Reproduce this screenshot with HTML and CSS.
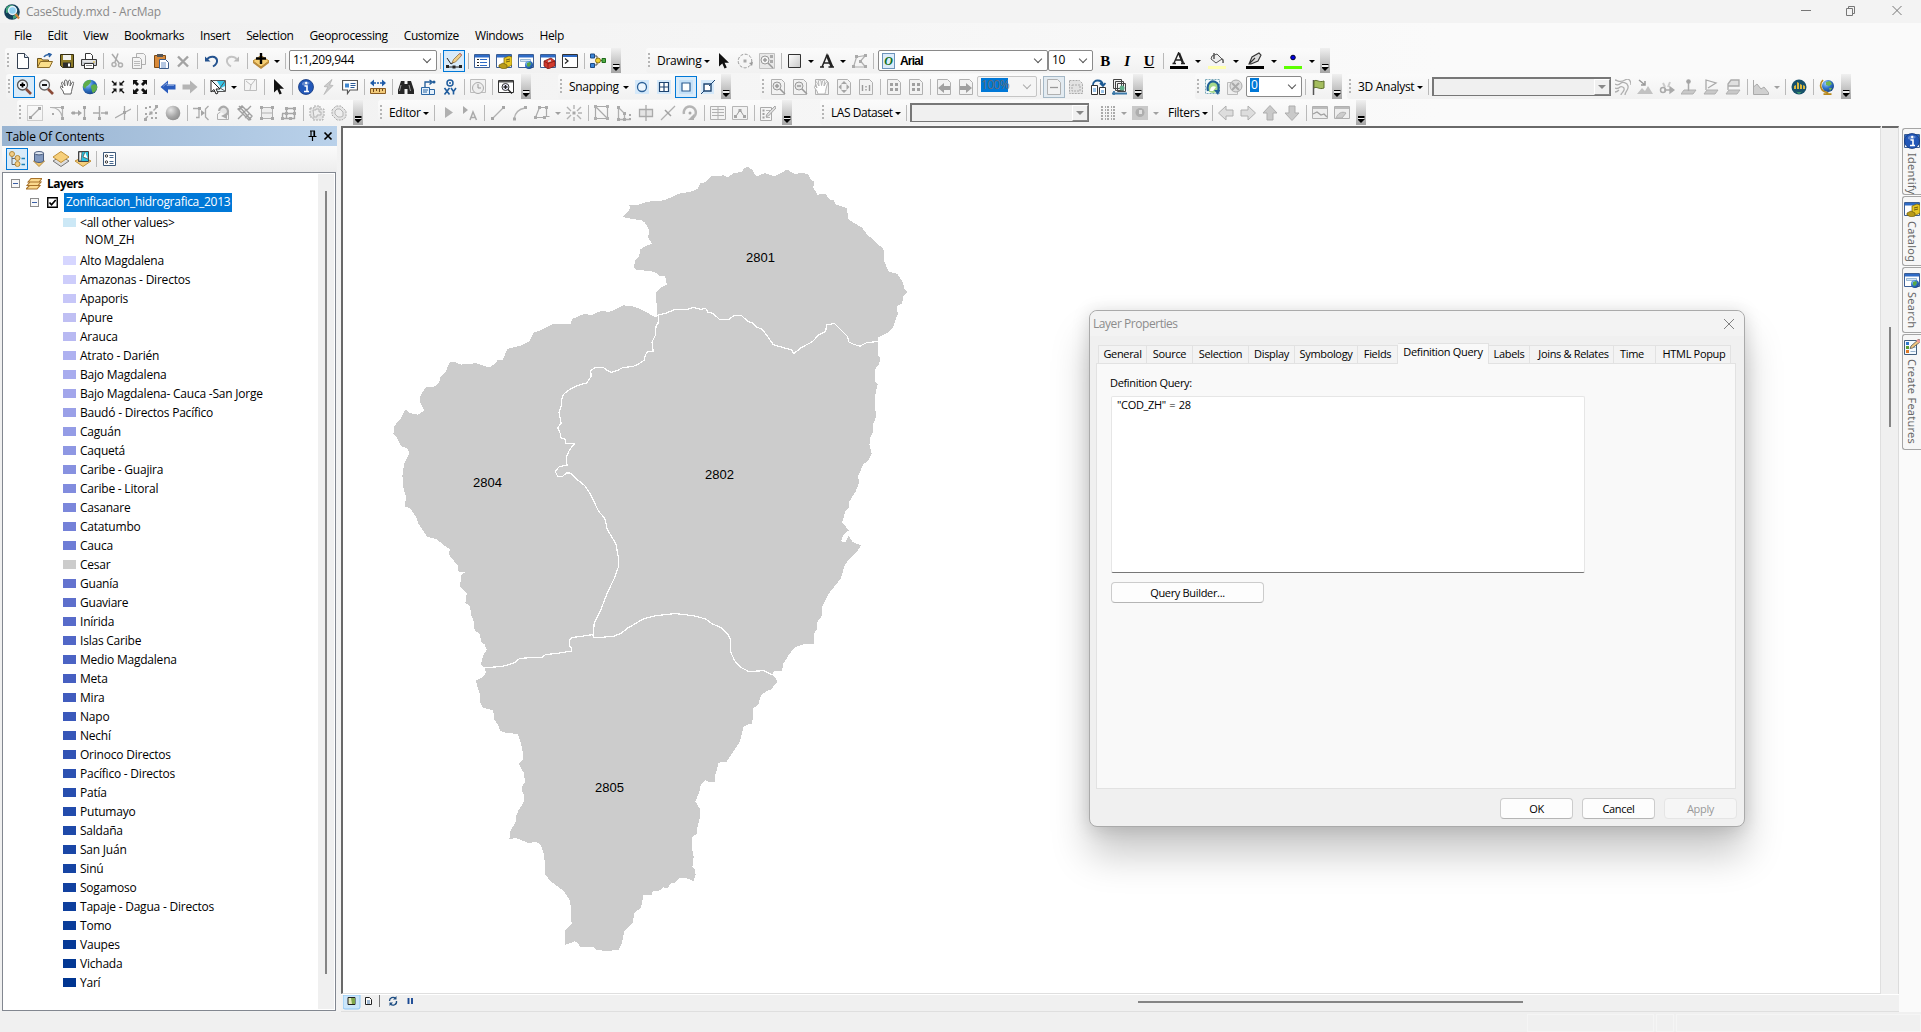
FILE: index.html
```html
<!DOCTYPE html>
<html lang="en">
<head>
<meta charset="utf-8">
<title>CaseStudy.mxd - ArcMap</title>
<link rel="stylesheet" href="styles.css">
</head>
<body>
<svg class="defs" width="0" height="0">
<defs>
<linearGradient id="gl" x1="0" y1="0" x2="1" y2="1"><stop offset="0" stop-color="#fff"/><stop offset="1" stop-color="#c9c9c9"/></linearGradient>
<radialGradient id="earth" cx=".35" cy=".3" r=".8"><stop offset="0" stop-color="#9fd0ff"/><stop offset=".5" stop-color="#2f73c8"/><stop offset="1" stop-color="#123a78"/></radialGradient>
<radialGradient id="ball" cx=".35" cy=".3" r=".8"><stop offset="0" stop-color="#e6e6e6"/><stop offset=".6" stop-color="#a5a5a5"/><stop offset="1" stop-color="#8a8a8a"/></radialGradient>
</defs>
<symbol id="new" viewBox="0 0 16 16"><path d="M2.500.5h7l4 4v11h-11z" fill="#fff" stroke="#333f50"/><path d="M9.500.5v4h4" fill="#dde8f5" stroke="#333f50"/></symbol>
<symbol id="open" viewBox="0 0 16 16"><path d="M.5 14.500v-9h4l1 1.500h6v2" fill="#e8bf55" stroke="#6b5320"/><path d="M.5 14.500l3-6h12l-3 6z" fill="#fbdf8b" stroke="#8a6b28"/><path d="M7 4c1-2 3-2.500 6-2.500M11 0l3 1.500-2 2.500" fill="none" stroke="#2d62a5" stroke-width="1.500"/></symbol>
<symbol id="save" viewBox="0 0 16 16"><path d="M1.500 1.500h13v13h-11l-2-2z" fill="#8c7a28" stroke="#332c10"/><path d="M4 2h8v5H4z" fill="#f2f2ee"/><path d="M4 9.500h8v5H4z" fill="#2c2c2c"/><path d="M9 10.500h2v3H9z" fill="#fff"/></symbol>
<symbol id="print" viewBox="0 0 16 16"><path d="M4.500 6V.5h5l2 2V6" fill="#fff" stroke="#333"/><path d="M.5 6.500h15v6H.5z" fill="#c9ccd0" stroke="#3a3a3a"/><path d="M2 8h12" stroke="#fff"/><path d="M3.500 10.500h9v5h-9z" fill="#fff" stroke="#333"/><path d="M5 12.500h6" stroke="#888"/><path d="M12 8.500h2v1h-2z" fill="#e2b530"/></symbol>
<symbol id="cut" viewBox="0 0 16 16"><path d="M3 1l7 9M9 .5L6 9" stroke="#aaa" stroke-width="1.500" fill="none"/><circle cx="5" cy="11.500" r="2" fill="none" stroke="#b0b0b0" stroke-width="1.500"/><circle cx="11.500" cy="12" r="2" fill="none" stroke="#b0b0b0" stroke-width="1.500"/></symbol>
<symbol id="copy" viewBox="0 0 16 16"><path d="M5.500.5h7l2 2v9h-9z" fill="#f4f4f4" stroke="#b0b0b0"/><path d="M1.500 4.500h7l2 2v9h-9z" fill="#f4f4f4" stroke="#a8a8a8"/><path d="M3 8.500h6M3 10.500h6M3 12.500h6" stroke="#bbb"/></symbol>
<symbol id="paste" viewBox="0 0 16 16"><path d="M1.500 2.500h11v12h-11z" fill="#d98a3a" stroke="#7d4a15"/><path d="M4 1h6v3H4z" fill="#555"/><path d="M6.500 6.500h6l3 3v6h-9z" fill="#fff" stroke="#3d5c8a"/><path d="M8 10h5M8 12h5M8 14h5" stroke="#6d90c4"/></symbol>
<symbol id="del" viewBox="0 0 16 16"><path d="M3 3.500l10 10M13 3.500l-10 10" stroke="#a3a3a3" stroke-width="2.400"/></symbol>
<symbol id="undo" viewBox="0 0 16 16"><path d="M2 3.500v5h5.500z" fill="#24538f"/><path d="M4 6.500c3-4 9-3.500 10 .5.5 3-1.500 5-4 6.500" fill="none" stroke="#24538f" stroke-width="2"/></symbol>
<symbol id="redo" viewBox="0 0 16 16"><path d="M14 3.500v5H8.500z" fill="#b8b8b8"/><path d="M12 6.500c-3-4-9-3.500-10 .5-.5 3 1.500 5 4 6.500" fill="none" stroke="#c4c4c4" stroke-width="2"/></symbol>
<symbol id="add" viewBox="0 0 16 16"><path d="M0 8l8-5.500L16 8l-8 6z" fill="#f5ce73" stroke="#b7862c"/><path d="M0 8l8 6 8-6v2l-8 6-8-6z" fill="#b98a3c"/><path d="M8 0v11M3 5.500h10" stroke="#000" stroke-width="2.400"/></symbol>
<symbol id="edtool" viewBox="0 0 16 16"><path d="M1.500 12v2h13v-2" fill="none" stroke="#222"/><path d="M0 12h3v3H0zM6.500 12.500h3v3h-3zM13 12h3v3h-3z" fill="#222"/><path d="M1 5l4 6 3-2" fill="none" stroke="#222"/><path d="M14 0L7.500 6.500 6 10l3.500-1L16 2z" fill="#f0cf86" stroke="#806030" stroke-width=".7"/><path d="M13.500.5l2 2" stroke="#d98a8a" stroke-width="1.500"/></symbol>
<symbol id="win" viewBox="0 0 16 16"><path d="M.5 1.500h15v13H.5z" fill="#fff" stroke="#3c5e94"/><path d="M1 2h14v2.500H1z" fill="#2e6bc6"/></symbol>
<symbol id="toc" viewBox="0 0 16 16"><use href="#win"/><path d="M3 6.500h2M3 9.500h2M3 12.500h2" stroke="#222"/><path d="M6 6.500h7M6 9.500h7M6 12.500h7" stroke="#2e6bc6"/></symbol>
<symbol id="cat" viewBox="0 0 16 16"><use href="#win"/><path d="M8 5l5-2 3 1v8l-5 2.500L8 13z" fill="#e6c522" stroke="#6d5b0d" stroke-width=".7"/><path d="M3 12l4-2 4 2v3l-4 1-4-2z" fill="#b89a18" stroke="#6d5b0d" stroke-width=".7"/><path d="M10 7l4-1M10 9l4-1" stroke="#6d5b0d"/></symbol>
<symbol id="sea" viewBox="0 0 16 16"><use href="#win"/><path d="M2.500 6.500h10v2h-10z" fill="#d7e8f7" stroke="#7da2c4" stroke-width=".7"/><circle cx="11" cy="12" r="4" fill="url(#earth)"/><path d="M9 10l3-1 1 2-2 3-2-1z" fill="#57a845"/></symbol>
<symbol id="tbx" viewBox="0 0 16 16"><use href="#win"/><path d="M4 8l7-3 4 3v5l-7 3-4-3z" fill="#d23a2e" stroke="#701510" stroke-width=".7"/><path d="M4 8l4 2.500 7-2.500M8 10.500V16" stroke="#701510" stroke-width=".7" fill="none"/><path d="M8 8.500l3-1" stroke="#ddd" stroke-width="1.500"/></symbol>
<symbol id="py" viewBox="0 0 16 16"><path d="M.5 1.500h15v13H.5z" fill="#fff" stroke="#333"/><path d="M1 2h14v2H1z" fill="#2e6bc6"/><path d="M3 5.500L6 8l-3 2.500" fill="none" stroke="#222" stroke-width="1.200"/></symbol>
<symbol id="model" viewBox="0 0 16 16"><path d="M4 3h3v9H4M7 7.500h8" fill="none" stroke="#555"/><path d="M.5 1h4v4h-4zM.5 10.500h4v4h-4z" fill="#3c86d8" stroke="#1d4b84"/><circle cx="8" cy="7.500" r="2.500" fill="#f0d032" stroke="#8a7510"/><path d="M12 5.500h3.500v4H12z" fill="#4fae45" stroke="#1f6a1a"/></symbol>
<symbol id="zin" viewBox="0 0 16 16"><circle cx="6.500" cy="6" r="5" fill="#f0f4f8" stroke="#555" stroke-width="1.300"/><path d="M6.500 3.500v5M4 6h5" stroke="#000" stroke-width="1.800"/><path d="M10 10l5 5" stroke="#8a4a38" stroke-width="2.600"/></symbol>
<symbol id="zout" viewBox="0 0 16 16"><circle cx="6.500" cy="6" r="5" fill="#f0f4f8" stroke="#666" stroke-width="1.300"/><path d="M4 6h5" stroke="#000" stroke-width="1.800"/><path d="M10 10l5 5" stroke="#8a4a38" stroke-width="2.600"/></symbol>
<symbol id="hand" viewBox="0 0 16 16"><path d="M4 15l-1-3-3-4c0-1.500 1.500-1 3 1L1.500 4C2 2.500 3 3 3.500 4.500L5 7 4.500 2C5 .5 6.500.7 7 2l.5 4.500L8.500 2c.5-1.300 2-1 2 .5L10 7l2-3.500c1-1 2-.5 1.500 1L12 10c0 2-1 3-1 5z" fill="#fff" stroke="currentColor"/></symbol>
<symbol id="globe" viewBox="0 0 16 16"><circle cx="8" cy="8" r="7.300" fill="url(#earth)"/><path d="M3 3c2-2 5-2.500 6-1.500S8 4 7 5.500 4 7 3.500 9 1 8 1 7s.5-2.500 2-4zM10 6c2-1 4-1 5 1s-1 5-3 6.500-2-2-2.500-3.500S8.500 7 10 6z" fill="#5fae4a"/></symbol>
<symbol id="fin" viewBox="0 0 16 16"><path d="M6.500 6.500v-4L5 4 2.500 1.500 1.500 2.500 4 5 2.500 6.500zM9.500 6.500v-4L11 4l2.500-2.500 1 1L12 5l1.500 1.500zM6.500 9.500v4L5 12l-2.500 2.500-1-1L4 11 2.500 9.500zM9.500 9.500v4L11 12l2.500 2.500 1-1L12 11l1.500-1.500z" fill="currentColor"/></symbol>
<symbol id="fout" viewBox="0 0 16 16"><path d="M1 1h5L4.500 2.500 7 5 5 7 2.500 4.500 1 6zM15 1v5l-1.500-1.500L11 7 9 5l2.500-2.500L10 1zM1 15v-5l1.500 1.500L5 9l2 2-2.500 2.500L6 15zM15 15h-5l1.500-1.500L9 11l2-2 2.500 2.500L15 10z" fill="currentColor"/></symbol>
<symbol id="prev" viewBox="0 0 16 16"><path d="M.5 8L8 1.500v4h7.500v5H8v4z" fill="currentColor"/><path d="M3 7.500l4-3.500v2.500h7" fill="none" stroke="#fff" stroke-opacity=".35"/></symbol>
<symbol id="next" viewBox="0 0 16 16"><path d="M15.500 8L8 1.500v4H.5v5H8v4z" fill="currentColor"/></symbol>
<symbol id="self" viewBox="0 0 16 16"><path d="M2.500 1.500h13v11h-13z" fill="#e9f6fb" stroke="#555"/><path d="M7 2h8v5l-4 2z" fill="#36c5e8"/><path d="M15 2l-5 7 5 3" fill="none" stroke="#555"/><path d="M1 1v12l3-2.500 2 4.500 2-1-2-4h4z" fill="#fff" stroke="#222"/></symbol>
<symbol id="clr" viewBox="0 0 16 16"><path d="M2.500.5h12v11h-12zM4 2l5 4 4-5M9 6l-1 5" fill="#f4f4f4" stroke="#bdbdbd"/></symbol>
<symbol id="arrow" viewBox="0 0 16 16"><path d="M4 0v13.500l3.300-3 2.200 5 2.300-1-2.200-4.800H14z" fill="currentColor"/></symbol>
<symbol id="info" viewBox="0 0 16 16"><circle cx="8" cy="8" r="7.500" fill="#2257b8" stroke="#14377c" stroke-width=".8"/><path d="M4 4a6 5 0 0 1 8 0 7 7 0 0 1-8 2z" fill="#fff" opacity=".3"/><path d="M6.500 7H9v5M6 12.500h5" stroke="#fff" stroke-width="1.600" fill="none"/><circle cx="8.200" cy="4" r="1.200" fill="#fff"/></symbol>
<symbol id="bolt" viewBox="0 0 16 16"><path d="M12 .5L4 7.500l4 .5-4 7.500L13 6.500 9.500 6z" fill="#ccc" stroke="#b2b2b2" stroke-width=".8"/></symbol>
<symbol id="popup" viewBox="0 0 16 16"><path d="M.5 1.500h15v9.500H8L5.500 14.500V11h-5z" fill="#fff" stroke="#555" stroke-width="1.200"/><path d="M3 4.500h4v4H3z" fill="#3f86cf"/><path d="M8.500 4.500h5M8.500 6.500h5M8.500 8.500h4" stroke="#2a5a96"/></symbol>
<symbol id="ruler" viewBox="0 0 16 16"><path d="M.5 9.500h15v5H.5z" fill="#f0c979" stroke="#8a5c22"/><path d="M3.500 10v3M6.500 10v2M9.500 10v3M12.500 10v2" stroke="#6d4515"/><path d="M0 4l4-3.500v7zM16 4l-4-3.500v7z" fill="#1f5ba8"/><path d="M4 4h8" stroke="#1f5ba8" stroke-width="1.500" stroke-dasharray="2 1"/></symbol>
<symbol id="bino" viewBox="0 0 16 16"><path d="M3 2h3.500v3h3V2H13l3 9v4H9.500v-5h-3v5H0v-4z" fill="#262626"/><path d="M3 6l-1.500 6M11 6l1.500 6" stroke="#999"/></symbol>
<symbol id="route" viewBox="0 0 16 16"><path d="M1.500 8.500h8v7h-8zM9.500 10.500h5v5h-5z" fill="#e4f0fb" stroke="#2b66a3"/><path d="M5 8V3h6M9.500 1l3 2-3 2.500" fill="none" stroke="#1f5b99" stroke-width="1.300"/><path d="M3 11h5M3 13h4" stroke="#2b66a3"/><circle cx="14" cy="3" r="1.500" fill="#1f5b99"/></symbol>
<symbol id="xy" viewBox="0 0 16 16"><circle cx="8" cy="4" r="3" fill="none" stroke="#205d9e" stroke-width="1.500"/><circle cx="8" cy="4" r="1" fill="#205d9e"/><path d="M2.500 9l5 6.500M7.500 9l-5 6.500M9 9l2.500 3.500M14 9l-2.500 3.500v3" fill="none" stroke="#205d9e" stroke-width="1.600"/></symbol>
<symbol id="time" viewBox="0 0 16 16"><path d="M.5.500h15v13H.5z" fill="#f2f2f2" stroke="#bcbcbc"/><circle cx="8" cy="9" r="5.500" fill="#eee" stroke="#aaa"/><path d="M8 5v4h3" fill="none" stroke="#999"/></symbol>
<symbol id="viewer" viewBox="0 0 16 16"><path d="M.5 1.500h15v12H.5z" fill="#fff" stroke="#333"/><path d="M1 2h14v1.500H1z" fill="#555"/><circle cx="7.500" cy="8" r="3.500" fill="#eef" stroke="#333"/><path d="M7.500 6v4M5.500 8h4M10 10.500l4 4" stroke="#222" stroke-width="1.300"/></symbol>
<symbol id="line" viewBox="0 0 16 16"><path d="M2.500 13.500l11-11" stroke="#b0b0b0" stroke-width="1.300"/><path d="M1 12h3v3H1zM12 1h3v3h-3z" fill="#a5a5a5"/></symbol>
<symbol id="scale" viewBox="0 0 16 16"><path d="M.5.500h15v15H.5z" fill="none" stroke="#a5a5a5" stroke-dasharray="1 1"/><path d="M4 12l8-8" stroke="#aaa" stroke-width="1.300"/><path d="M2 11h3v3H2zM11 2h3v3h-3z" fill="#a0a0a0"/></symbol>
<symbol id="arc" viewBox="0 0 16 16"><path d="M1 2.500h12.500v12M2 2.500c6 0 10 3 11.500 10" fill="none" stroke="#b3b3b3" stroke-width="1.200"/><path d="M12 1h3v3h-3zM12 12h3v3h-3zM3 8h2v2H3z" fill="#a9a9a9"/></symbol>
<symbol id="curve" viewBox="0 0 16 16"><path d="M2 14c1-6 5-10 11-11" fill="none" stroke="#b3b3b3" stroke-width="1.300"/><path d="M1 12.500h3v3H1zM12 1h3v3h-3z" fill="#a9a9a9"/></symbol>
<symbol id="ext" viewBox="0 0 16 16"><path d="M0 8h8M13.500 1v14" stroke="#aaa" stroke-width="1.300"/><path d="M7 5l4 3-4 3zM12 1h3v3h-3zM12 12h3v3h-3zM1 6.500h3v3H1z" fill="#a5a5a5"/></symbol>
<symbol id="trim" viewBox="0 0 16 16"><path d="M6.500 1v14M0 8h6M8 8h6" stroke="#aaa" stroke-width="1.400" fill="none"/><path d="M12 6.500h3v3h-3zM5 12h3v3H5z" fill="#a8a8a8"/></symbol>
<symbol id="isec" viewBox="0 0 16 16"><path d="M0 13l16-9M9.500 1v14" stroke="#ababab" stroke-width="1.300"/><path d="M8 6h3v3H8z" fill="#a5a5a5"/></symbol>
<symbol id="expl" viewBox="0 0 16 16"><path d="M1 2l4 4M15 2l-4 4M1 14l4-4M15 14l-4-4M8 0v4M8 12v4M0 8h4M12 8h4" stroke="#b3b3b3" stroke-width="1.400"/><path d="M6.500 6.500h3v3h-3z" fill="#a8a8a8"/></symbol>
<symbol id="frac" viewBox="0 0 16 16"><path d="M2 14L14 2" stroke="#aaa" stroke-width="1.400" stroke-dasharray="4 2"/><path d="M1 13h3v3H1zM12 0h3v3h-3zM6.500 6.500h3v3h-3zM2 2h2v2H2zM12 12h2v2h-2zM6 1h2v2H6zM12 7h2v2h-2zM2 8h2v2H2zM8 12h2v2H8z" fill="#a8a8a8"/></symbol>
<symbol id="ball1" viewBox="0 0 16 16"><circle cx="8" cy="8" r="7.300" fill="url(#ball)"/></symbol>
<symbol id="conn" viewBox="0 0 16 16"><path d="M0 3.500h6v9H3M15.500 1l-3 3v8l3 3" fill="none" stroke="#aaa" stroke-width="1.300"/><path d="M8 5l4 3-4 3zM5 2h3v3H5z" fill="#a5a5a5"/></symbol>
<symbol id="rot" viewBox="0 0 16 16"><path d="M2.500 14.500V9l3-2M13.500 14.500h-11M13.500 14.500V6" fill="none" stroke="#b0b0b0"/><path d="M4 6a4.500 4.500 0 1 1 7 4" fill="#e4e4e4" stroke="#aaa" stroke-width="2.200"/><path d="M6 11l6-3v6z" fill="#aaa"/></symbol>
<symbol id="rect2" viewBox="0 0 16 16"><path d="M2.500 2.500h11v11h-11zM2.500 8h11" fill="#eee" stroke="#b0b0b0"/><path d="M1 1h3v3H1zM12 1h3v3h-3zM1 12h3v3H1zM12 12h3v3h-3z" fill="#a8a8a8"/></symbol>
<symbol id="hatch" viewBox="0 0 16 16"><path d="M1 4l4-3 10 10-3 4zM2 1l12 14M6 1l-4 4M10 4l-5 5M13 8l-5 5M14 1L9 6M6 9l-5 5" fill="none" stroke="#a0a0a0" stroke-width="1.400"/></symbol>
<symbol id="grid4" viewBox="0 0 16 16"><path d="M5.500 2v12M13.500 2v12M5.500 3.500h8M1 8.500h13M1 13.500h13M1.500 8.500v5" fill="none" stroke="#a5a5a5" stroke-width="1.400"/><path d="M4 2h3v3H4zM12 2h3v3h-3zM4 7h3v3H4zM12 7h3v3h-3zM0 12h3v3H0zM8 12h3v3H8z" fill="#aaa"/></symbol>
<symbol id="blob" viewBox="0 0 16 16"><path d="M1 3h4V1h6v3h4v7h-1v4H4v-3H1z" fill="#e4e4e4" stroke="#aaa" stroke-dasharray="2 1"/><path d="M4 5h3V4h3v3h2v3H8v2H5z" fill="#eee" stroke="#b5b5b5"/></symbol>
<symbol id="blob2" viewBox="0 0 16 16"><path d="M1 5l4-4h5l5 5v6l-4 3H6L1 10z" fill="#e4e4e4" stroke="#aaa" stroke-dasharray="2 1"/><path d="M4 6l2-2h3l3 3v4l-2 1H7L4 9z" fill="#eee" stroke="#b5b5b5"/></symbol>
<symbol id="earrow" viewBox="0 0 16 16"><path d="M5 2v11l8-5.500z" fill="#b0b0b0"/></symbol>
<symbol id="eann" viewBox="0 0 16 16"><path d="M1 1v8l5-4z" fill="#aaa"/><path d="M8 15l3-8 3.500 8M9 12.500h4.500" fill="none" stroke="#aaa" stroke-width="1.500"/></symbol>
<symbol id="poly" viewBox="0 0 16 16"><path d="M5.500 2.500h7v9h3M5.500 2.500l-4 10h9" fill="none" stroke="#aaa" stroke-width="1.200"/><path d="M4 1h3v3H4zM11 1h3v3h-3zM0 11h3v3H0zM9 11h3v3H9z" fill="#aaa"/></symbol>
<symbol id="vert" viewBox="0 0 16 16"><path d="M1.500 14V1.500h12v12h-12zM2 2l11 11" fill="none" stroke="#aaa" stroke-width="1.200"/><path d="M0 0h3v3H0zM12 0h3v3h-3zM0 12h3v3H0zM12 12h3v3h-3z" fill="#b0b0b0"/></symbol>
<symbol id="resh" viewBox="0 0 16 16"><path d="M2.500 1v13.500h12M2.500 2.500l6 6v6" fill="none" stroke="#b0b0b0" stroke-width="1.300"/><path d="M1 1h3v3H1zM7 7h3v3H7zM1 13h3v3H1zM7 13h3v3H7zM13 9h2v2h-2zM13 13h2v2h-2z" fill="#aaa"/></symbol>
<symbol id="cutp" viewBox="0 0 16 16"><path d="M1.500 4.500h13v7h-13zM8 0v16" fill="#e4e4e4" stroke="#aaa" stroke-width="1.300"/></symbol>
<symbol id="split" viewBox="0 0 16 16"><path d="M1 15L15 1" stroke="#b0b0b0" stroke-width="1.300"/><path d="M5 5l6 6" stroke="#a0a0a0" stroke-width="1.500"/></symbol>
<symbol id="rotg" viewBox="0 0 16 16"><path d="M2 9a6 6 0 1 1 8 4" fill="none" stroke="#b5b5b5" stroke-width="2.500"/><path d="M12 9v6H6z" fill="#b0b0b0"/><circle cx="8" cy="8" r="1.500" fill="#aaa"/></symbol>
<symbol id="table" viewBox="0 0 16 16"><path d="M.5 1.500h15v13H.5zM8 2v12M2 4.500h12M2 7.500h12M2 10.500h12" fill="#f2f2f2" stroke="#b0b0b0"/></symbol>
<symbol id="sk" viewBox="0 0 16 16"><path d="M.5 1.500h15v13H.5z" fill="#f2f2f2" stroke="#b5b5b5"/><path d="M3.500 12L8 5l4.500 7" fill="none" stroke="#999"/><path d="M6.500 4h3v3h-3zM2 10h3v3H2zM11 10h3v3h-3z" fill="#a5a5a5"/></symbol>
<symbol id="cf" viewBox="0 0 16 16"><path d="M.5 2.500h11v13H.5z" fill="#f5f5f5" stroke="#aaa"/><path d="M2.500 5.500h2M2.500 9h2M2.500 12.500h2" stroke="#a0a0a0" stroke-width="2"/><path d="M6 5.500h4M6 12.500h4" stroke="#b5b5b5"/><path d="M15 1L7 9l-1 2.500L8.500 11 16 3z" fill="#ddd" stroke="#999" stroke-width=".8"/></symbol>
<symbol id="cfc" viewBox="0 0 16 16"><path d="M.5 1.500h12v14H.5z" fill="#f4faff" stroke="#44607e"/><path d="M2 3h3v3H2z" fill="#2f78cd"/><path d="M2 7h3v3H2z" fill="#5a9e33"/><path d="M2 11h3v3H2z" fill="#dd7a2a"/><path d="M6.500 8.500h5M6.500 12.500h5" stroke="#98b2cc"/><path d="M15 0L7 7 6 9.500 8.500 9 16 3z" fill="#f1c57c" stroke="#555" stroke-width=".8"/><path d="M13 1l3 2" stroke="#ef9a9a" stroke-width="2.500"/></symbol>
<symbol id="s1" viewBox="0 0 16 16"><path d="M1 1h14v14H1z" fill="#d5e9fa"/><circle cx="8" cy="8" r="4.500" fill="#edf6fd" stroke="#2b6098" stroke-width="1.300"/></symbol>
<symbol id="s2" viewBox="0 0 16 16"><path d="M1 1h14v14H1z" fill="#d5e9fa"/><path d="M3.500 3.500h9v9h-9zM8 3.500v9M3.500 8h9" fill="#fff" stroke="#1d4471" stroke-width="1.200"/></symbol>
<symbol id="s3" viewBox="0 0 16 16"><path d="M1 1h14v14H1z" fill="#c5e1f8"/><path d="M4 4h8v8H4z" fill="#fff" stroke="#2b5c90" stroke-width="1.200"/></symbol>
<symbol id="s4" viewBox="0 0 16 16"><path d="M1 1h13v14H1z" fill="#d5e9fa"/><path d="M4 5h7v7H4z" fill="#fff" stroke="#1d4471" stroke-width="1.400"/><path d="M9 7l6-6M1 15l3-3" stroke="#1d4471"/></symbol>
<symbol id="page" viewBox="0 0 16 16"><path d="M1.500.500h10l3 3v12h-13z" fill="#f2f2f2" stroke="#b0b0b0"/></symbol>
<symbol id="pzin" viewBox="0 0 16 16"><use href="#page"/><circle cx="7" cy="7" r="4" fill="#e8e8e8" stroke="#999"/><path d="M7 5v4M5 7h4M10 10l5 5" stroke="#999" stroke-width="1.500"/></symbol>
<symbol id="pzout" viewBox="0 0 16 16"><use href="#page"/><circle cx="7" cy="7" r="4" fill="#e8e8e8" stroke="#999"/><path d="M5 7h4M10 10l5 5" stroke="#999" stroke-width="1.500"/></symbol>
<symbol id="pfull" viewBox="0 0 16 16"><use href="#page"/><path d="M8 2l3 3H5zM8 14l3-3H5zM2.500 8l3-3v6zM13.500 8l-3-3v6z" fill="#a5a5a5"/></symbol>
<symbol id="p11" viewBox="0 0 16 16"><use href="#page"/><path d="M4.500 6v6M11.500 6v6M8 7v1.500M8 10v1.500" stroke="#999" stroke-width="1.400"/></symbol>
<symbol id="pfin" viewBox="0 0 16 16"><use href="#page"/><path d="M4 4h3v3H4zM9 4h3v3H9zM4 9h3v3H4zM9 9h3v3H9z" fill="#a0a0a0"/></symbol>
<symbol id="pl" viewBox="0 0 16 16"><use href="#page"/><path d="M2 9l6-5v3h6v4H8v3z" fill="#a0a0a0"/></symbol>
<symbol id="pr" viewBox="0 0 16 16"><use href="#page"/><path d="M14 9L8 4v3H2v4h6v3z" fill="#a0a0a0"/></symbol>
<symbol id="pdr" viewBox="0 0 16 16"><use href="#page"/><path d="M4 8.500h8" stroke="#999" stroke-width="1.300"/></symbol>
<symbol id="pdash" viewBox="0 0 16 16"><path d="M1.500 1.500h10l3 3v10h-13zM4 6h8v6H4z" fill="#e2e2e2" stroke="#aaa" stroke-dasharray="2 1"/></symbol>
<symbol id="chl" viewBox="0 0 16 16"><path d="M1.500 6.500h6v9h-6zM9.500 8.500h6v7h-6z" fill="#fff" stroke="#333"/><path d="M3 9h3v4H3zM11 11h3v3h-3z" fill="#9cc4e8"/><path d="M3 6c0-6 9-6 10 0M10 4l3 3 2.500-3" fill="none" stroke="#1d5a93" stroke-width="1.800"/></symbol>
<symbol id="ddp" viewBox="0 0 16 16"><path d="M1.500.500h8v9h-8zM3.500 2.500h8v9h-8zM5.500 4.500h8v8h-8z" fill="#f2f2f2" stroke="#444"/><circle cx="10" cy="9" r="2.500" fill="#5fae8a"/><path d="M0 14.500h15M2 12v4" stroke="#3b78a8" stroke-width="1.800"/></symbol>
<symbol id="ov" viewBox="0 0 16 16"><path d="M.5.500h14v14H.5z" fill="#f4fafc" stroke="#7aa8b8" stroke-dasharray="2 1"/><circle cx="8" cy="8" r="6" fill="#a6d88b"/><path d="M3 12C1 4 7 0 12 4c2 2 2 5 1 9" fill="none" stroke="#1e5f98" stroke-width="2.200"/><path d="M9 11h6l-2 5z" fill="#1e5f98"/><path d="M5 12c0-4 3-6 6-4l-3 4z" fill="#fff"/></symbol>
<symbol id="ovx" viewBox="0 0 16 16"><path d="M.5 3.500h10v12H.5z" fill="#eee" stroke="#bbb"/><circle cx="9" cy="7" r="6" fill="#ddd" stroke="#aaa"/><path d="M5 4l7 7M12 4l-7 7" stroke="#aaa" stroke-width="2"/></symbol>
<symbol id="flag" viewBox="0 0 16 16"><path d="M2.500 1v15" stroke="#555" stroke-width="1.500"/><path d="M3 2c3-2 5 2 10 0v7c-5 2-7-2-10 0z" fill="#a4bd5e" stroke="#5c6f2c"/></symbol>
<symbol id="rotc" viewBox="0 0 16 16"><circle cx="8" cy="8" r="6.800" fill="none" stroke="#999" stroke-dasharray="3 1.500"/><path d="M6.500 6.500h3v3h-3z" fill="#aaa"/><path d="M12 10l4-1-1 4z" fill="#999"/></symbol>
<symbol id="zsel" viewBox="0 0 16 16"><path d="M.5.500h15v15H.5z" fill="#e8e8e8" stroke="#c0c0c0"/><circle cx="6" cy="7" r="4" fill="#f4f4f4" stroke="#999"/><path d="M6 5v4M4 7h4M9 10l5 5" stroke="#999" stroke-width="1.500"/><path d="M11 2h3v3h-3zM11 7h3v3h-3z" fill="#aaa"/></symbol>
<symbol id="rect" viewBox="0 0 16 16"><path d="M1.500 1.500h12v13h-12z" fill="url(#gl)" stroke="#333"/></symbol>
<symbol id="bigA" viewBox="0 0 16 16"><path d="M3 14L8 2l5 12M4.500 10h6M1 14h4M9.500 14H15" fill="none" stroke="#222" stroke-width="1.500"/><path d="M8 2l5 12" stroke="#222" stroke-width="2.800"/></symbol>
<symbol id="everts" viewBox="0 0 16 16"><path d="M14.500 2.500l-9 1.500-3 10h12l-5-6z" fill="none" stroke="#b0b0b0" stroke-width="1.200"/><path d="M4 2h3v3H4zM13 1h3v3h-3zM1 12h3v3H1zM13 12h3v3h-3zM8 7h3v3H8z" fill="#aaa"/></symbol>
<symbol id="fc" viewBox="0 0 20 18"><path d="M5 11l4.500-10 4.500 10M6.500 8h6M3.500 11.500h3.500M12 11.500h4" fill="none" stroke="#222" stroke-width="1.400"/><path d="M10 1l4 10" stroke="#222" stroke-width="2.200"/><path d="M1 14h18v3H1z" fill="#000"/></symbol>
<symbol id="fill" viewBox="0 0 20 18"><path d="M5 4l5-2 5 5-6 4-5-4z" fill="#eee" stroke="#555"/><path d="M7 7V1M15 7c2 1 1 3 1 4" fill="none" stroke="#555" stroke-width="1.500"/><path d="M1 14h18v3H1z" fill="#ffffb0"/></symbol>
<symbol id="pen" viewBox="0 0 20 18"><path d="M4 12l3-7 7-4 2 2-3 6-7 3zM4 12l6-6" fill="#ddd" stroke="#333" stroke-width="1.100"/><path d="M1 14h18v3H1z" fill="#000"/></symbol>
<symbol id="mark" viewBox="0 0 20 18"><circle cx="10" cy="5.500" r="2.300" fill="#0000e0" stroke="#002"/><path d="M1 14h18v3H1z" fill="#5cff00"/></symbol>
<symbol id="cont" viewBox="0 0 16 16"><path d="M0 1c4 1 5 3 10 0s6 3 6 5M0 5c3 2 5 0 6-1s6-1 7 3-3 5-3 9M0 9c2 1 4 0 5-1s5 0 4 3-3 3-3 5M0 13c2 0 3-1 4-2" fill="none" stroke="#b0b0b0" stroke-width="1.300"/></symbol>
<symbol id="mtn" viewBox="0 0 16 16"><path d="M0 15l5-6 3 3 3-5 5 8z" fill="#c2c2c2"/><path d="M2 1l6 5M8 2v4H4" fill="none" stroke="#999" stroke-width="1.500"/></symbol>
<symbol id="sight" viewBox="0 0 16 16"><path d="M4 4l2 4M11 3l-2 5" stroke="#ccc" stroke-width="2"/><circle cx="4" cy="11" r="2.500" fill="none" stroke="#aaa" stroke-width="1.500"/><path d="M5 11h8M11 8l4 3-4 3z" fill="#aaa" stroke="#aaa" stroke-width="1.300"/></symbol>
<symbol id="ppt" viewBox="0 0 16 16"><path d="M3 11h12l-3 4H0z" fill="#c8c8c8" stroke="#b0b0b0"/><path d="M7.500 4v8" stroke="#aaa" stroke-width="1.500"/><circle cx="7.500" cy="2.500" r="2.300" fill="#a5a5a5"/></symbol>
<symbol id="pln" viewBox="0 0 16 16"><path d="M4 11h11l-3 4H1z" fill="#c8c8c8" stroke="#b0b0b0"/><path d="M3 11V1l10 3-8 5" fill="none" stroke="#aaa" stroke-width="1.300"/></symbol>
<symbol id="pol3" viewBox="0 0 16 16"><path d="M4 11h11l-3 4H1z" fill="#c8c8c8" stroke="#b0b0b0"/><path d="M3 11V5l3-4h8v6H3" fill="#e0e0e0" stroke="#aaa" stroke-width="1.300"/></symbol>
<symbol id="prof" viewBox="0 0 16 16"><path d="M.5 1v14.500h15v-2L11 8 8 10 4 5 .5 8z" fill="#d0d0d0" stroke="#aaa"/></symbol>
<symbol id="scene" viewBox="0 0 16 16"><circle cx="8" cy="8" r="7.500" fill="#17506b"/><path d="M3 10V7l2-1v4zM6 10V3l2 1v6zM9 10V5l2 1v4zM12 10V6l2 1v3z" fill="#dcb93c"/><path d="M3 11c3 3 7 3 10 0l-5 4z" fill="#3fa06a"/></symbol>
<symbol id="aglobe" viewBox="0 0 16 16"><circle cx="9" cy="7" r="6" fill="url(#earth)"/><path d="M7 3l4-1 2 3-3 2-3-1zM10 9h3l-2 3z" fill="#6fb551"/><path d="M4 1C0 5 1 12 8 13.500M8.500 13v2M4.500 15.200h8" fill="none" stroke="#b8891c" stroke-width="1.700"/></symbol>
<symbol id="las" viewBox="0 0 16 16"><path d="M1 2h14M1 5h14M1 8h14M1 11h14M1 14h14" stroke="#aaa" stroke-width="2" stroke-dasharray="2 2 1 1"/></symbol>
<symbol id="surf" viewBox="0 0 16 16"><path d="M0 1h16v14H0z" fill="#c9c9c9"/><circle cx="8" cy="7.500" r="4.500" fill="#aeaeae"/><path d="M7 5h3v4H7z" fill="#e0e0e0"/></symbol>
<symbol id="aL" viewBox="0 0 16 16"><path d="M.5 8L8 1v4h7v6H8v4z" fill="#ddd" stroke="#b0b0b0"/></symbol>
<symbol id="aR" viewBox="0 0 16 16"><path d="M15.500 8L8 1v4H1v6h7v4z" fill="#ddd" stroke="#b0b0b0"/></symbol>
<symbol id="aU" viewBox="0 0 16 16"><path d="M8 .5L15 8h-4v7H5V8H1z" fill="#c9c9c9" stroke="#adadad"/></symbol>
<symbol id="aD" viewBox="0 0 16 16"><path d="M8 15.500L15 8h-4V1H5v7H1z" fill="#c9c9c9" stroke="#adadad"/></symbol>
<symbol id="pw" viewBox="0 0 16 16"><path d="M.5 1.500h15v12H.5z" fill="#eee" stroke="#b0b0b0"/><path d="M1 2h14v2H1z" fill="#bbb"/><path d="M1 9l4-2 4 3 3-1 3 3" fill="none" stroke="#a0a0a0" stroke-width="1.300"/></symbol>
<symbol id="vw" viewBox="0 0 16 16"><path d="M.5 1.500h15v12H.5z" fill="#eee" stroke="#b0b0b0"/><path d="M1 2h14v2H1z" fill="#bbb"/><path d="M2 13c2-5 6-7 10-5l-4 5z" fill="#ccc" stroke="#b0b0b0"/></symbol>
<symbol id="t1" viewBox="0 0 16 16"><path d="M3 5v8.500h4M3 7.500h4" fill="none" stroke="#666"/><circle cx="3" cy="3" r="2.500" fill="#f2cd85" stroke="#b48a3c"/><circle cx="8.500" cy="7" r="2.500" fill="#f2cd85" stroke="#b48a3c"/><circle cx="8.500" cy="13" r="2.500" fill="#f2cd85" stroke="#b48a3c"/><path d="M12.500 7.500H16M12.500 13.500H16" stroke="#1d7fb5" stroke-width="1.600"/></symbol>
<symbol id="t2" viewBox="0 0 16 16"><path d="M2.500 10L8 15.500l5.500-5.500z" fill="#f2c66c" stroke="#b48a3c"/><path d="M3.500 2v8c2 2 7 2 9 0V2z" fill="#8299bf" stroke="#4a5c7d"/><ellipse cx="8" cy="2.200" rx="4.500" ry="1.700" fill="#dfe7f2" stroke="#4a5c7d"/></symbol>
<symbol id="t3" viewBox="0 0 16 16"><path d="M0 10l8-5 8 5-8 5.500z" fill="#ddd" stroke="#777"/><path d="M0 6l8-5.500L16 6l-8 5.500z" fill="#f6cf7b" stroke="#c0913a"/></symbol>
<symbol id="t4" viewBox="0 0 16 16"><path d="M0 10l8-4 8 4-8 5.500z" fill="#f6cf7b" stroke="#c0913a"/><path d="M3.500.500h10v10h-10z" fill="#2cc0dd" stroke="#444"/><path d="M4 1h3l-1 9H4zM10 1l-2 5 5 2" fill="#fff" stroke="#444" stroke-width=".7"/></symbol>
<symbol id="t5" viewBox="0 0 16 16"><path d="M1.500 1.500h12v13h-12z" fill="#fff" stroke="#3d5878"/><circle cx="4.500" cy="5" r="1.200" fill="none" stroke="#333"/><circle cx="4.500" cy="11" r="1.200" fill="none" stroke="#333"/><path d="M7.500 4.500h4M7.500 6.500h4M7.500 10.500h4M7.500 12.500h4" stroke="#47688f"/></symbol>
<symbol id="lyr" viewBox="0 0 16 14"><path d="M0 12l3.500-3.500H14L11 12zM1 8.500L4 5h11l-3 3.500zM2 5l3-3.500h11L13 5z" fill="#fbd98e" stroke="#a8722a" stroke-width="1.100"/></symbol>
<symbol id="app" viewBox="0 0 16 16"><circle cx="8" cy="8" r="7.800" fill="#143f5a"/><path d="M2 4c2-3 6-4 8-2L6 8l-4 1zM9 12l5-3-2 5-3 1z" fill="#42a37c"/><circle cx="8.500" cy="6.500" r="4" fill="#8fd0f0" stroke="#e6f2f8" stroke-width="1.400"/><path d="M11.500 10l3.500 4.500" stroke="#d0843c" stroke-width="2.200"/></symbol>
</svg>

<div class="window">
  <header class="titlebar">
    <svg class="app"><use href="#app"/></svg><span class="apptitle">CaseStudy.mxd - ArcMap</span>
    <svg class="winbtns" viewBox="0 0 110 20"><path d="M4 9.500h10M49.500 7.500h6v7h-6zM51.500 7.500v-2h6v7h-2M95.500 5l9 9M104.500 5l-9 9" fill="none" stroke="#777"/></svg>
  </header>
  <nav class="menu"><span>File</span><span>Edit</span><span>View</span><span>Bookmarks</span><span>Insert</span><span>Selection</span><span>Geoprocessing</span><span>Customize</span><span>Windows</span><span>Help</span></nav>

  <div class="row">
    <div class="tb std"><i class="grip"></i>
      <svg class="ic"><use href="#new"/></svg><svg class="ic"><use href="#open"/></svg><svg class="ic"><use href="#save"/></svg><svg class="ic"><use href="#print"/></svg><i class="sep"></i>
      <svg class="ic"><use href="#cut"/></svg><svg class="ic"><use href="#copy"/></svg><svg class="ic"><use href="#paste"/></svg><svg class="ic"><use href="#del"/></svg><i class="sep"></i>
      <svg class="ic"><use href="#undo"/></svg><svg class="ic"><use href="#redo"/></svg><i class="sep"></i>
      <svg class="ic"><use href="#add"/></svg><i class="car"></i><i class="sep"></i>
      <div class="combo c-scale"><span>1:1,209,944</span><i class="chev"></i></div><i class="sep"></i>
      <span class="on"><svg class="ic"><use href="#edtool"/></svg></span><i class="sep"></i>
      <svg class="ic"><use href="#toc"/></svg><svg class="ic"><use href="#cat"/></svg><svg class="ic"><use href="#sea"/></svg><svg class="ic"><use href="#tbx"/></svg><svg class="ic"><use href="#py"/></svg><i class="sep"></i>
      <svg class="ic"><use href="#model"/></svg><i class="more"></i>
    </div>
    <div class="tb draw"><i class="grip"></i><span class="lbl l-draw">Drawing<i class="car"></i></span>
      <svg class="ic"><use href="#arrow"/></svg><svg class="ic"><use href="#rotc"/></svg><svg class="ic"><use href="#zsel"/></svg><i class="sep"></i>
      <svg class="ic"><use href="#rect"/></svg><i class="car"></i><svg class="ic"><use href="#bigA"/></svg><i class="car"></i><svg class="ic"><use href="#everts"/></svg><i class="sep"></i>
      <div class="combo c-font"><b class="ot">O</b><strong>Arial</strong><i class="chev"></i></div><div class="combo c-size"><span>10</span><i class="chev"></i></div>
      <span class="fmt fb">B</span><span class="fmt fi">I</span><span class="fmt fu">U</span><i class="sep last"></i>
      <svg class="icw"><use href="#fc"/></svg><i class="car wide"></i><svg class="icw"><use href="#fill"/></svg><i class="car wide"></i><svg class="icw"><use href="#pen"/></svg><i class="car wide"></i><svg class="icw"><use href="#mark"/></svg><i class="car wide"></i><i class="more tight"></i>
    </div>
  </div>

  <div class="row">
    <div class="tb tools"><i class="grip"></i>
      <span class="on"><svg class="ic"><use href="#zin"/></svg></span><svg class="ic"><use href="#zout"/></svg><svg class="ic k6"><use href="#hand"/></svg><svg class="ic"><use href="#globe"/></svg><i class="sep"></i>
      <svg class="ic"><use href="#fin"/></svg><svg class="ic"><use href="#fout"/></svg><i class="sep"></i>
      <svg class="ic blue"><use href="#prev"/></svg><svg class="ic gray"><use href="#next"/></svg><i class="sep"></i>
      <svg class="ic"><use href="#self"/></svg><i class="car"></i><svg class="ic"><use href="#clr"/></svg><i class="sep"></i>
      <svg class="ic"><use href="#arrow"/></svg><i class="sep"></i>
      <svg class="ic"><use href="#info"/></svg><svg class="ic"><use href="#bolt"/></svg><svg class="ic"><use href="#popup"/></svg><i class="sep"></i>
      <svg class="ic"><use href="#ruler"/></svg><i class="sep"></i>
      <svg class="ic"><use href="#bino"/></svg><svg class="ic"><use href="#route"/></svg><svg class="ic"><use href="#xy"/></svg><i class="sep"></i>
      <svg class="ic"><use href="#time"/></svg><i class="sep"></i>
      <svg class="ic"><use href="#viewer"/></svg><i class="more"></i>
    </div>
    <div class="tb snap"><i class="grip"></i><span class="lbl l-snap">Snapping<i class="car"></i></span>
      <svg class="ic"><use href="#s1"/></svg><svg class="ic"><use href="#s2"/></svg><span class="on"><svg class="ic"><use href="#s3"/></svg></span><svg class="ic"><use href="#s4"/></svg><i class="more"></i>
    </div>
    <div class="tb layout"><i class="grip"></i>
      <svg class="ic"><use href="#pzin"/></svg><svg class="ic"><use href="#pzout"/></svg><svg class="ic gray"><use href="#page"/><use href="#hand"/></svg><svg class="ic"><use href="#pfull"/></svg><svg class="ic"><use href="#p11"/></svg><i class="sep"></i>
      <svg class="ic"><use href="#pfin"/></svg><svg class="ic"><use href="#pfin"/></svg><i class="sep"></i>
      <svg class="ic"><use href="#pl"/></svg><svg class="ic"><use href="#pr"/></svg>
      <div class="combo c-pct"><span>100%</span><i class="chev"></i></div><i class="sep"></i>
      <span class="on dim"><svg class="ic"><use href="#pdr"/></svg></span><svg class="ic"><use href="#pdash"/></svg><svg class="ic"><use href="#chl"/></svg><svg class="ic"><use href="#ddp"/></svg><i class="more"></i>
    </div>
    <div class="tb ddp"><i class="grip"></i>
      <svg class="ic"><use href="#ov"/></svg><svg class="ic"><use href="#ovx"/></svg>
      <div class="combo c-zero"><span>0</span><i class="chev"></i></div><i class="sep"></i><svg class="ic"><use href="#flag"/></svg><i class="more"></i>
    </div>
    <div class="tb three"><i class="grip"></i><span class="lbl l-3d">3D Analyst<i class="car"></i></span><i class="sep"></i>
      <div class="combo flat"><i class="btn"></i></div>
      <svg class="ic"><use href="#cont"/></svg><svg class="ic"><use href="#mtn"/></svg><svg class="ic"><use href="#sight"/></svg><svg class="ic"><use href="#ppt"/></svg><svg class="ic"><use href="#pln"/></svg><svg class="ic"><use href="#pol3"/></svg><i class="sep"></i>
      <svg class="ic"><use href="#prof"/></svg><i class="car off"></i><i class="sep"></i><svg class="ic"><use href="#scene"/></svg><i class="sep"></i><svg class="ic"><use href="#aglobe"/></svg><i class="more"></i>
    </div>
  </div>

  <div class="row">
    <div class="tb adv"><i class="grip"></i>
      <svg class="ic"><use href="#scale"/></svg><svg class="ic"><use href="#arc"/></svg><svg class="ic"><use href="#ext"/></svg><svg class="ic"><use href="#trim"/></svg><svg class="ic"><use href="#isec"/></svg><i class="sep"></i>
      <svg class="ic"><use href="#frac"/></svg><svg class="ic"><use href="#ball1"/></svg><i class="sep"></i>
      <svg class="ic"><use href="#conn"/></svg><svg class="ic"><use href="#rot"/></svg><svg class="ic"><use href="#hatch"/></svg><svg class="ic"><use href="#rect2"/></svg><svg class="ic"><use href="#grid4"/></svg><i class="sep"></i>
      <svg class="ic"><use href="#blob"/></svg><svg class="ic"><use href="#blob2"/></svg><i class="more"></i>
    </div>
    <div class="tb editor"><i class="grip"></i><span class="lbl l-ed">Editor<i class="car"></i></span><i class="sep"></i>
      <svg class="ic"><use href="#earrow"/></svg><svg class="ic"><use href="#eann"/></svg><i class="sep"></i>
      <svg class="ic"><use href="#line"/></svg><svg class="ic"><use href="#curve"/></svg><svg class="ic"><use href="#poly"/></svg><i class="car off"></i><svg class="ic"><use href="#expl"/></svg><i class="sep"></i>
      <svg class="ic"><use href="#vert"/></svg><svg class="ic"><use href="#resh"/></svg><svg class="ic"><use href="#cutp"/></svg><svg class="ic"><use href="#split"/></svg><svg class="ic"><use href="#rotg"/></svg><i class="sep"></i>
      <svg class="ic"><use href="#table"/></svg><svg class="ic"><use href="#sk"/></svg><i class="sep"></i><svg class="ic"><use href="#cf"/></svg><i class="more"></i>
    </div>
    <div class="tb las"><i class="grip"></i><span class="lbl l-las">LAS Dataset<i class="car"></i></span><i class="sep"></i>
      <div class="combo flat"><i class="btn"></i></div>
      <svg class="ic first"><use href="#las"/></svg><i class="car off"></i><svg class="ic"><use href="#surf"/></svg><i class="car off"></i>
      <span class="lbl l-fil">Filters<i class="car"></i></span><i class="sep"></i>
      <svg class="ic"><use href="#aL"/></svg><svg class="ic"><use href="#aR"/></svg><svg class="ic"><use href="#aU"/></svg><svg class="ic"><use href="#aD"/></svg><i class="sep"></i>
      <svg class="ic"><use href="#pw"/></svg><svg class="ic"><use href="#vw"/></svg><i class="more"></i>
    </div>
  </div>

  <main class="work">
    <aside class="toc">
      <div class="toc-title"><span>Table Of Contents</span><svg viewBox="0 0 30 14"><path d="M4 2h5M5 2v5M8 2v5M8.500 2v5M2.500 7.500h8M6.500 8v4" stroke="#000" stroke-width="1.200" fill="none"/><path d="M18.500 3.500l7 7M25.500 3.500l-7 7" stroke="#000" stroke-width="1.700"/></svg></div>
      <div class="toc-tools"><span class="on"><svg class="ic"><use href="#t1"/></svg></span><svg class="ic"><use href="#t2"/></svg><svg class="ic"><use href="#t3"/></svg><svg class="ic"><use href="#t4"/></svg><i class="sep"></i><svg class="ic"><use href="#t5"/></svg></div>
      <div class="tree">
        <div class="list">
          <div class="root"><i class="exp"></i><svg class="lyr"><use href="#lyr"/></svg><b>Layers</b></div>
          <div class="layer"><i class="exp"></i><svg class="chk" viewBox="0 0 11 11"><path d="M.75.750h9.500v9.500H.750z" fill="#fff" stroke="#000" stroke-width="1.400"/><path d="M2.500 5.500l2 2.300L8.700 3" fill="none" stroke="#000" stroke-width="1.700"/></svg><span class="sel">Zonificacion_hidrografica_2013</span></div>
          <div class="it other"><i style="background:#cce8f6"></i>&lt;all other values&gt;</div>
          <div class="head">NOM_ZH</div>
          <div class="it"><i style="background:#d6d6ff"></i>Alto Magdalena</div>
          <div class="it"><i style="background:#cdcdfb"></i>Amazonas - Directos</div>
          <div class="it"><i style="background:#c6c6f8"></i>Apaporis</div>
          <div class="it"><i style="background:#bfbff3"></i>Apure</div>
          <div class="it"><i style="background:#b8b9f2"></i>Arauca</div>
          <div class="it"><i style="background:#aeb1f0"></i>Atrato - Darién</div>
          <div class="it"><i style="background:#a8acee"></i>Bajo Magdalena</div>
          <div class="it"><i style="background:#a2a6eb"></i>Bajo Magdalena- Cauca -San Jorge</div>
          <div class="it"><i style="background:#9aa0e8"></i>Baudó - Directos Pacífico</div>
          <div class="it"><i style="background:#949ce6"></i>Caguán</div>
          <div class="it"><i style="background:#8e97e3"></i>Caquetá</div>
          <div class="it"><i style="background:#8791e0"></i>Caribe - Guajira</div>
          <div class="it"><i style="background:#818cde"></i>Caribe - Litoral</div>
          <div class="it"><i style="background:#7b87db"></i>Casanare</div>
          <div class="it"><i style="background:#7481d8"></i>Catatumbo</div>
          <div class="it"><i style="background:#6e7dd6"></i>Cauca</div>
          <div class="it"><i style="background:#cccccc"></i>Cesar</div>
          <div class="it"><i style="background:#6373cf"></i>Guanía</div>
          <div class="it"><i style="background:#5d6fcc"></i>Guaviare</div>
          <div class="it"><i style="background:#576bca"></i>Inírida</div>
          <div class="it"><i style="background:#5167c7"></i>Islas Caribe</div>
          <div class="it"><i style="background:#4b63c4"></i>Medio Magdalena</div>
          <div class="it"><i style="background:#465fc1"></i>Meta</div>
          <div class="it"><i style="background:#415cbe"></i>Mira</div>
          <div class="it"><i style="background:#3b59bb"></i>Napo</div>
          <div class="it"><i style="background:#3656b8"></i>Nechí</div>
          <div class="it"><i style="background:#3153b5"></i>Orinoco Directos</div>
          <div class="it"><i style="background:#2c51b2"></i>Pacífico - Directos</div>
          <div class="it"><i style="background:#274eaf"></i>Patía</div>
          <div class="it"><i style="background:#224bac"></i>Putumayo</div>
          <div class="it"><i style="background:#1e49a9"></i>Saldaña</div>
          <div class="it"><i style="background:#1a46a6"></i>San Juán</div>
          <div class="it"><i style="background:#1644a3"></i>Sinú</div>
          <div class="it"><i style="background:#1241a0"></i>Sogamoso</div>
          <div class="it"><i style="background:#0e3f9d"></i>Tapaje - Dagua - Directos</div>
          <div class="it"><i style="background:#0a3d9a"></i>Tomo</div>
          <div class="it"><i style="background:#063a97"></i>Vaupes</div>
          <div class="it"><i style="background:#033894"></i>Vichada</div>
          <div class="it"><i style="background:#003591"></i>Yarí</div>
        </div>
        <div class="sb"><i></i></div>
      </div>
    </aside>

    <section class="view">
      <div class="canvas">
        <div class="map">
          <svg class="basins" viewBox="343 128 1538 864" shape-rendering="crispEdges">
            <g transform="translate(380 150) scale(.344388 .357143)">
              <path fill="#ccc" d="M806 460L803 430 800 400 812 388 833 376 828 354 815 354 796 341 745 335 737 328 741 310 752 298 756 278 770 270 789 262 779 245 781 222 768 202 760 197 712 190 706 186 720 172 727 163 724 154 752 153 775 145 825 141 870 122 905 116 922 108 930 94 945 90 962 74 985 74 998 70 1008 77 1028 64 1050 62 1058 50 1070 48 1082 56 1092 74 1118 65 1145 73 1165 64 1182 55 1205 67 1230 64 1245 70 1249 82 1261 88 1258 105 1270 125 1295 123 1304 138 1317 140 1323 152 1355 163 1361 195 1400 218 1415 237 1440 258 1462 278 1463 308 1477 341 1502 347 1518 370 1523 390 1532 397 1520 410 1516 430 1502 437 1503 460 1490 495 1478 510 1447 525 1445 540 1447 575 1453 585 1448 602 1436 615 1437 648 1445 657 1437 690 1436 710 1441 745 1433 765 1432 790 1425 800 1421 825 1428 850 1418 868 1404 880 1389 910 1390 935 1380 958 1362 985 1362 1000 1352 1010 1342 1042 1361 1065 1345 1078 1339 1096 1352 1098 1361 1080 1372 1098 1396 1106 1390 1118 1350 1160 1338 1200 1305 1240 1285 1275 1282 1305 1268 1325 1270 1340 1262 1350 1259 1382 1230 1384 1205 1392 1188 1412 1170 1440 1168 1458 1145 1460 1137 1470 1100 1490 320 1490 307 1472 310 1460 304 1450 293 1440 300 1415 310 1400 304 1385 293 1375 290 1355 275 1345 272 1320 264 1300 262 1278 248 1268 252 1240 233 1222 235 1190 246 1183 228 1180 225 1163 200 1133 203 1118 185 1106 165 1090 137 1083 125 1065 110 1045 108 1032 88 1003 73 998 75 970 68 945 65 912 70 880 85 848 80 837 60 828 48 805 39 795 42 772 62 750 73 726 85 736 110 741 128 730 116 705 118 686 133 665 160 662 172 650 175 635 190 622 202 595 215 592 235 601 280 597 318 609 335 598 342 587 357 587 370 557 412 547 433 536 447 510 465 506 500 488 553 488 558 473 595 458 612 463 643 450 665 454 690 443 708 435 740 439 765 450 797 467z"/>
            </g>
            <path fill="#ccc" transform="translate(440 600) scale(.333333)" d="M133 204L138 218 128 232 107 241 113 262 120 285 120 305 128 322 160 332 162 358 175 375 180 392 200 400 233 401 243 430 248 455 248 478 237 492 252 520 255 545 247 560 247 575 253 585 252 605 236 630 228 650 228 665 212 690 208 718 228 714 262 728 290 727 303 735 313 765 315 822 330 842 370 872 388 898 393 920 392 955 396 972 376 992 376 1034 405 1024 415 1030 420 1042 462 1042 470 1050 500 1053 535 1050 545 1030 553 995 578 968 583 940 603 922 611 884 635 884 637 875 660 871 670 862 683 864 692 850 705 849 718 834 740 835 760 843 767 825 765 810 757 802 761 770 756 745 757 710 770 702 772 682 779 655 779 625 766 605 778 575 783 552 797 541 808 547 824 546 826 525 836 488 860 485 900 425 910 382 920 374 935 372 940 350 938 325 955 315 962 288 980 272 992 270 1012 245 1005 232 995 224 960 190 180 180z"/>
            <g class="lines" transform="translate(380 150) scale(.344388 .357143)">
              <path d="M808 462L830 457 858 446 890 447 910 441 930 446 946 444 952 454 968 458 985 474 1012 475 1028 463 1050 464 1068 480 1082 484 1092 495 1110 502 1127 524 1142 545 1195 560 1202 570 1222 554 1255 537 1275 517 1294 508 1297 489 1320 486 1345 510 1357 522 1362 538 1378 545 1394 549 1412 540 1445 536"/>
              <path d="M797 467L810 462 807 486 802 492 799 520 790 538 793 563 778 564 770 575 768 588 750 600 735 606 705 609 690 617 672 623 660 617 648 609 625 609 612 618 613 634 600 652 575 659 550 671 533 684 527 700 526 718 520 735 526 765 516 778 524 795 525 806 537 810 540 822 565 822 550 840 541 860 543 882 520 887 509 900 516 914 530 914 542 904 554 905 570 921 595 940 610 962 635 1012 652 1030 660 1062 685 1103 692 1140 692 1168 680 1200 660 1240 640 1290 622 1325 619 1358"/>
              <path d="M302 1450L340 1447 365 1444 390 1436 405 1424 450 1420 470 1421 480 1413 525 1408 555 1403 557 1395 550 1390 551 1372 558 1365 590 1361 617 1357 622 1365 650 1364 680 1361 700 1353 720 1338 765 1313 800 1304 858 1298 910 1304 945 1313 965 1327 992 1338 1010 1356 1018 1372 1018 1405 1030 1430 1045 1447 1070 1460 1115 1458 1140 1470"/>
            </g>
            <g class="codes"><text x="760.500" y="262">2801</text><text x="719.500" y="479">2802</text><text x="487.500" y="487">2804</text><text x="609.500" y="792">2805</text></g>
          </svg>
        </div>
        <div class="vsb"><i></i></div>
      </div>
      <div class="hbar">
        <svg viewBox="0 0 80 16"><path d="M0 0h17v12q0 2-2 2H2q-2 0-2-2z" fill="#cbe6fb" stroke="#8cc6f5"/><path d="M5 2.500h7v7H5z" fill="#e3ebb8" stroke="#222"/><path d="M8 3h4v6H9z" fill="#7fa84c"/><path d="M22.500 2.500h4l2 2v5h-6z" fill="#fff" stroke="#222"/><path d="M24 6h3M24 8h3" stroke="#47a"/><path d="M36.500 0v12" stroke="#777"/><path d="M46.500 6a3.500 3.500 0 0 1 6-2.500M53.500 6a3.500 3.500 0 0 1-6 3" fill="none" stroke="#1d4d82" stroke-width="1.300"/><path d="M53.500 1v3.500H50zM46.500 11V7.500H50z" fill="#1d4d82"/><path d="M65.500 3v6M69 3v6" stroke="#1b4a94" stroke-width="1.900"/></svg>
        <i class="hth"></i>
      </div>
    </section>

    <aside class="dock">
      <div class="dt d1"><svg><use href="#win"/><use href="#info"/></svg><span>Identify</span></div>
      <div class="dt d2"><svg><use href="#cat"/></svg><span>Catalog</span></div>
      <div class="dt d3"><svg><use href="#sea"/></svg><span>Search</span></div>
      <div class="dt d4"><svg><use href="#cfc"/></svg><span>Create Features</span></div>
    </aside>
  </main>
  <footer class="status"><i class="p1"></i><i class="p2"></i><i class="p3"></i></footer>

  <div class="dialog">
    <div class="dlg-title"><span>Layer Properties</span><svg viewBox="0 0 12 12"><path d="M1 1l10 10M11 1L1 11" stroke="#808080"/></svg></div>
    <div class="tabs"><span class="w1">General</span><span class="w2">Source</span><span class="w3">Selection</span><span class="w4">Display</span><span class="w5">Symbology</span><span class="w6">Fields</span><span class="w7 act">Definition Query</span><span class="w8">Labels</span><span class="w9">Joins &amp; Relates</span><span class="w10">Time</span><span class="w11">HTML Popup</span></div>
    <div class="panel"><label>Definition Query:</label><div class="query">"COD_ZH" = 28</div><div class="button qb">Query Builder...</div></div>
    <div class="actions"><div class="button">OK</div><div class="button">Cancel</div><div class="button disabled">Apply</div></div>
  </div>
</div>
</body>
</html>
```
FILE: styles.css
```css
* { box-sizing: border-box; }
body { margin: 0; background: #f0f0f0; font: 12px/16px "Open Sans", "Noto Sans", sans-serif; color: #000; letter-spacing: -0.3px; }
i { font-style: normal; }
.defs { position: absolute; }
.window { position: relative; width: 1921px; height: 1032px; overflow: hidden; display: flex; flex-direction: column; background: linear-gradient(90deg, #f0f0f0, #fafafa 75%); }
.titlebar { height: 23px; flex: none; display: flex; align-items: center; background: #f3f3f3; padding: 0 0 0 4px; }
.app { width: 16px; height: 16px; margin-right: 6px; }
.apptitle { color: #8a8a8a; letter-spacing: -0.2px; }
.winbtns { width: 110px; height: 20px; margin: -2px 14px 0 auto; }
.menu { height: 25px; flex: none; display: flex; gap: 16px; padding: 5px 0 0 14px; letter-spacing: -0.37px; }

/* toolbars */
.row { display: flex; height: 26px; flex: none; }
.tb { display: flex; align-items: center; height: 25px; flex: none; background: linear-gradient(#fbfbfb, #f1f1f1); border-radius: 3px 0 0 3px; }
.std { margin-left: 5px; } .draw { margin-left: 25px; }
.tools { margin-left: 6px; } .snap { margin-left: 27px; } .layout { margin-left: 29px; } .ddp { margin-left: 52px; } .three { margin-left: 5px; }
.adv { margin-left: 17px; } .editor { margin-left: 15px; } .las { margin-left: 28px; }
.grip { width: 7px; height: 15px; flex: none; background: radial-gradient(circle at 1px 1px, #b5b5b5 1px, transparent 1.200px) 2px 0 / 12px 4px; }
.ic { width: 16px; height: 16px; margin: 0 3px; flex: none; color: #111; overflow: visible; }
.ic.gray { color: #b5b5b5; } .ic.blue { color: #2a5cbd; } .ic.k6 { color: #666; } .ic.first { margin-left: 11px; }
.icw { width: 20px; height: 18px; margin: 0 1px; flex: none; }
.sep { width: 1px; height: 16px; margin: 0 2px 0 3px; flex: none; background: #b9b9b9; }
.sep.last { margin-right: 4px; }
.car { width: 10px; flex: none; display: flex; justify-content: center; }
.car::after { content: ""; border: 3px solid transparent; border-top: 3px solid #000; border-bottom: 0; margin-top: 1px; }
.car.wide { width: 16px; }
.car.off::after { border-top-color: #a0a0a0; }
.on { width: 22px; height: 22px; flex: none; display: flex; align-items: center; justify-content: center; border: 1px solid #0078d7; background: #d9ebf9; }
.on .ic { margin: 0; }
.on.dim { border-color: #a5b8c6; background: #e3ebf1; }
.lbl { display: flex; align-items: center; justify-content: space-between; flex: none; padding-left: 4px; white-space: nowrap; }
.l-draw { width: 59px; } .l-snap { width: 66px; } .l-3d { width: 71px; } .l-ed { width: 46px; } .l-las { width: 76px; letter-spacing: -0.45px; } .l-fil { width: 48px; padding-left: 7px; }
.more { width: 10px; height: 25px; margin-left: 2px; flex: none; display: flex; align-items: flex-end; justify-content: center; background: linear-gradient(#f0f0f0, #a5a5a5); }
.more.tight { margin-left: 0; }
.tools .more { margin-left: 4px; }
.three .more, .adv .more, .editor .more, .las .more { margin-left: 3px; }
.more::after { content: ""; width: 7px; height: 7px; margin-bottom: 2px; background: linear-gradient(transparent 1.500px, #efefef 1.500px, #efefef 3px, transparent 3px), #000; clip-path: polygon(0 0, 100% 0, 100% 50%, 50% 100%, 0 50%); }
.combo { height: 21px; flex: none; display: flex; align-items: center; background: #fff; border: 1px solid #8a8a8a; border-radius: 2px; padding-left: 3px; }
.chev { width: 6px; height: 6px; margin: -4px 6px 0 auto; border: solid #555; border-width: 0 1px 1px 0; transform: rotate(45deg); flex: none; }
.c-scale { width: 148px; margin-left: 1px; } .c-scale span { margin-top: -2px; }
.c-font { width: 170px; margin-left: 2px; } .c-font strong { font-size: 12px; letter-spacing: -0.8px; font-family: "Liberation Sans", sans-serif; }
.ot { width: 13px; height: 16px; margin-right: 5px; border: 1px solid #6d94bb; background: #dcecfb; color: #127022; font: italic bold 12px/14px "Liberation Serif", serif; text-align: center; }
.c-size { width: 45px; margin: 0 1px 0 0; } .c-size span { margin-top: -2px; }
.c-pct { width: 60px; border-color: #c5c5c5; background: #f5f5f5; } .c-pct .chev { border-color: #aaa; }
.c-pct span { width: 27px; height: 14px; margin-bottom: 3px; line-height: 13px; background: #0078d7; color: #5e6c79; letter-spacing: -0.6px; }
.c-zero { width: 56px; } .c-zero span { padding: 0 1px; margin-bottom: 3px; line-height: 14px; background: #0078d7; color: #fff; }
.combo.flat { width: 179px; height: 19px; margin-left: 1px; border: 1px solid #777; border-width: 2px 1px 1px 2px; border-radius: 0; background: #f0f0f0; justify-content: flex-end; }
.three .flat { margin-right: 1px; }
.flat .btn { width: 16px; height: 16px; border: 1px solid; border-color: #fff #888 #888 #fff; display: flex; align-items: center; justify-content: center; }
.flat .btn::after { content: ""; border: 4px solid transparent; border-top-color: #888; border-bottom: 0; }
.fmt { width: 22px; text-align: center; font: 15px/20px "Liberation Serif", serif; flex: none; }
.fb { font-weight: bold; } .fi { font-style: italic; font-weight: bold; } .fu { text-decoration: underline; font-weight: bold; }

/* table of contents */
.work { display: flex; flex: none; height: 886px; }
.toc { width: 335px; margin-left: 2px; flex: none; display: flex; flex-direction: column; padding-bottom: 1px; }
.toc-title { height: 20px; flex: none; display: flex; align-items: center; justify-content: space-between; padding: 2px 1px 0 4px; background: linear-gradient(90deg, #99b4d1, #b9d1ea); letter-spacing: -0.120px; }
.toc-title svg { width: 30px; height: 14px; margin-top: -2px; }
.toc-tools { height: 26px; flex: none; display: flex; align-items: center; gap: 6px; padding-left: 4px; background: linear-gradient(#fbfbfb, #ededed); }
.toc-tools .ic { margin: 0; }
.toc-tools .on { margin-right: -3px; }
.toc-tools .sep { margin: 0 -1px; }
.tree { flex: 1; display: flex; border: 1px solid #828790; background: #fff; width: 334px; }
.list { flex: 1; padding-top: 1px; }
.root, .layer { display: flex; align-items: center; height: 19px; }
.root { padding-left: 8px; } .root b { letter-spacing: -0.550px; margin-left: 5px; }
.layer { padding-left: 27px; }
.exp { width: 9px; height: 9px; border: 1px solid #8c8c8c; background: linear-gradient(#3b5fa5, #3b5fa5) center / 5px 1px no-repeat, #f8f8f8; }
.lyr { width: 16px; height: 14px; margin-left: 6px; }
.chk { width: 11px; height: 11px; margin: 0 6px 0 8px; }
.sel { height: 19px; width: 168px; padding-left: 2px; background: #0078d7; color: #fff; white-space: nowrap; letter-spacing: -0.280px; line-height: 17px; }
.it { height: 19px; display: flex; align-items: center; padding-left: 60px; line-height: 18px; white-space: pre; letter-spacing: -0.220px; }
.it i { width: 13px; height: 9px; margin-right: 4px; }
.other { margin-top: 1px; }
.head { height: 18px; padding-left: 82px; line-height: 15px; margin-bottom: 1px; letter-spacing: -0.1px; }
.sb { width: 16px; margin: 1px 1px 1px 0; background: #f0f0f0; display: flex; justify-content: center; padding-top: 17px; }
.sb i { width: 2px; height: 783px; background: #858585; }

/* map view */
.view { width: 1558px; margin-left: 4px; flex: none; display: flex; flex-direction: column; background: #f0f0f0; }
.canvas { display: flex; height: 868px; }
.map { width: 1541px; height: 868px; border: 2px solid #696969; border-right: 1px solid #dfdfdf; border-bottom: 1px solid #dfdfdf; background: #fff; overflow: hidden; }
.basins { display: block; width: 1538px; height: 864px; }
.lines path { fill: none; stroke: #fff; stroke-width: 1.200px; vector-effect: non-scaling-stroke; }
.codes { font: 13px "Liberation Sans", sans-serif; text-anchor: middle; letter-spacing: 0; fill: #000; }
.vsb { width: 17px; border-top: 2px solid #696969; border-right: 1px solid #dcdcdc; margin-left: 1px; padding: 199px 0 0 7px; }
.vsb i { display: block; width: 2px; height: 100px; background: #858585; }
.hbar { height: 18px; display: flex; border-bottom: 1px solid #dfdfdf; border-top: 1px solid #fff; padding: 0 0 0 2px; }
.hbar svg { width: 80px; height: 16px; }
.hth { width: 385px; height: 2px; margin: 6px 0 0 715px; background: #858585; }
.dock { width: 22px; padding: 2px 0 0 3px; background: #fafafa; display: flex; flex-direction: column; gap: 1px; flex: 1; }
.dt { display: flex; flex-direction: column; align-items: center; padding-top: 4px; gap: 4px; border: 1px solid #a5a5a5; border-right: 0; border-radius: 3px 0 0 3px; background: #f7f7f7; }
.dt svg { width: 16px; height: 16px; flex: none; }
.dt span { writing-mode: vertical-rl; color: #666; font: 11px/16px "Noto Sans", sans-serif; letter-spacing: 0.250px; white-space: nowrap; }
.d1 { height: 67px; } .d2 { height: 70px; } .d3 { height: 66px; } .d4 { height: 116px; }
.status { flex: 1; display: flex; background: #f0f0f0; padding: 2px 0 0 1527px; gap: 2px; }
.status i { height: 18px; border: 1px solid #f5f5f5; }
.p1 { width: 127px; } .p2 { width: 18px; } .p3 { flex: 1; }

/* layer properties window */
.dialog { position: absolute; left: 1089px; top: 310px; width: 656px; height: 517px; border: 1px solid #aaa; border-radius: 8px; background: #f0f0f0; box-shadow: 0 28px 38px rgba(0,0,0,.21), 0 2px 18px rgba(0,0,0,.15); font-size: 11px; letter-spacing: -0.330px; }
.dlg-title { height: 25px; display: flex; align-items: center; justify-content: space-between; padding: 0 9px 0 3px; border-radius: 8px 8px 0 0; background: #f3f3f3; color: #8c8c8c; font-size: 12px; letter-spacing: -0.450px; }
.dlg-title svg { width: 12px; height: 12px; }
.tabs { display: flex; align-items: flex-end; height: 27px; padding-left: 8px; position: relative; top: 1px; }
.tabs span { height: 19px; line-height: 16px; border: 1px solid #e2e2e2; border-left-width: 0; background: #f3f3f3; text-align: center; white-space: nowrap; }
.tabs .w1 { width: 49px; border-left-width: 1px; } .tabs .w2 { width: 46px; } .tabs .w3 { width: 56px; } .tabs .w4 { width: 46px; } .tabs .w5 { width: 63px; } .tabs .w6 { width: 40px; } .tabs .w8 { width: 41px; } .tabs .w9 { width: 84px; padding-left: 4px; } .tabs .w10 { width: 42px; text-align: left; padding-left: 6px; } .tabs .w11 { width: 75px; padding-left: 2px; }
.tabs .act { width: 91px; height: 21px; background: #f9f9f9; border-bottom: 0; }
.panel { width: 640px; height: 426px; margin-left: 6px; padding: 11px 0 0 13px; border: 1px solid #e2e2e2; background: #f9f9f9; display: flex; flex-direction: column; }
.query { width: 474px; height: 177px; margin: 5px 0 9px 1px; padding: 0 5px; border: 1px solid #e6e6e6; border-bottom: 1px solid #777; border-radius: 2px; background: #fff; word-spacing: 1px; }
.button { width: 73px; height: 21px; border: 1px solid #ccc; border-bottom-color: #b5b5b5; border-radius: 4px; background: #fdfdfd; text-align: center; line-height: 19px; }
.qb { width: 153px; margin-left: 1px; }
.actions { display: flex; justify-content: flex-end; gap: 9px; padding: 9px 7px 0 0; }
.disabled { color: #999; border-color: #e5e5e5; background: #f6f6f6; }
```
